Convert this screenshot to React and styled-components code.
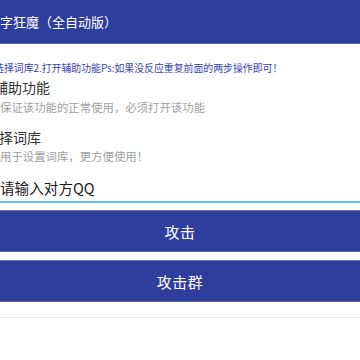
import React from 'react';
import styled, { createGlobalStyle } from 'styled-components';

const Global = createGlobalStyle`
  html, body {
    margin: 0;
    padding: 0;
    background: #ffffff;
    font-family: "Noto Sans CJK SC", "Noto Sans", sans-serif;
    overflow: hidden;
  }
`;

const Page = styled.div`
  width: 360px;
  height: 360px;
  background: #fff;
  overflow: hidden;
`;

const Header = styled.div`
  height: 43px;
  background: #2f3d9c;
  border-bottom: 1px solid #5b67b7;
  display: flex;
  align-items: center;
`;

const Title = styled.div`
  color: #fff;
  font-size: 13px;
  margin-left: -13px;
  white-space: nowrap;
`;

const Hint = styled.div`
  margin-top: 17px;
  margin-left: -6px;
  font-size: 9.9px;
  line-height: 14px;
  color: #3344b0;
  white-space: nowrap;
`;

const ItemTitle = styled.div`
  margin-top: ${(p) => p.$gap}px;
  margin-left: ${(p) => p.$shift}px;
  font-size: 14px;
  line-height: 20px;
  color: #333;
  white-space: nowrap;
`;

const ItemDesc = styled.div`
  margin-top: ${(p) => p.$gap}px;
  margin-left: ${(p) => p.$shift}px;
  font-size: 11.4px;
  line-height: 16px;
  color: #a0a0a0;
  white-space: nowrap;
`;

const Input = styled.div`
  margin-top: 13px;
  padding-bottom: 2px;
  border-bottom: 2px solid #5ec4e2;
  font-size: 14.6px;
  line-height: 22px;
  color: #1a1a1a;
  white-space: nowrap;
`;

const Button = styled.button`
  display: block;
  width: 100%;
  height: 42px;
  margin: ${(p) => p.$gap}px 0 0;
  padding: 0;
  border: none;
  border-top: 1px solid #6670bd;
  border-bottom: 1px solid #5a66b6;
  background: #2f3d9c;
  color: #fff;
  font-family: inherit;
  font-size: 15px;
  letter-spacing: 0.5px;
`;

const Footer = styled.div`
  margin-top: 15px;
  height: 40px;
  border-top: 1px solid #e6e6e6;
  box-shadow: 0 -1px 2px rgba(0, 0, 0, 0.04);
`;

export default function App() {
  return (
    <Page>
      <Global />
      <Header>
        <Title>打字狂魔（全自动版）</Title>
      </Header>
      <Hint>选择词库2.打开辅助功能Ps:如果没反应重复前面的两步操作即可！</Hint>
      <ItemTitle $gap={2} $shift={-6}>辅助功能</ItemTitle>
      <ItemDesc $gap={2} $shift={0}>保证该功能的正常使用，必须打开该功能</ItemDesc>
      <ItemTitle $gap={12} $shift={-15}>选择词库</ItemTitle>
      <ItemDesc $gap={1} $shift={0}>用于设置词库，更方便使用！</ItemDesc>
      <Input>请输入对方QQ</Input>
      <Button $gap={7}>攻击</Button>
      <Button $gap={8}>攻击群</Button>
      <Footer />
    </Page>
  );
}
